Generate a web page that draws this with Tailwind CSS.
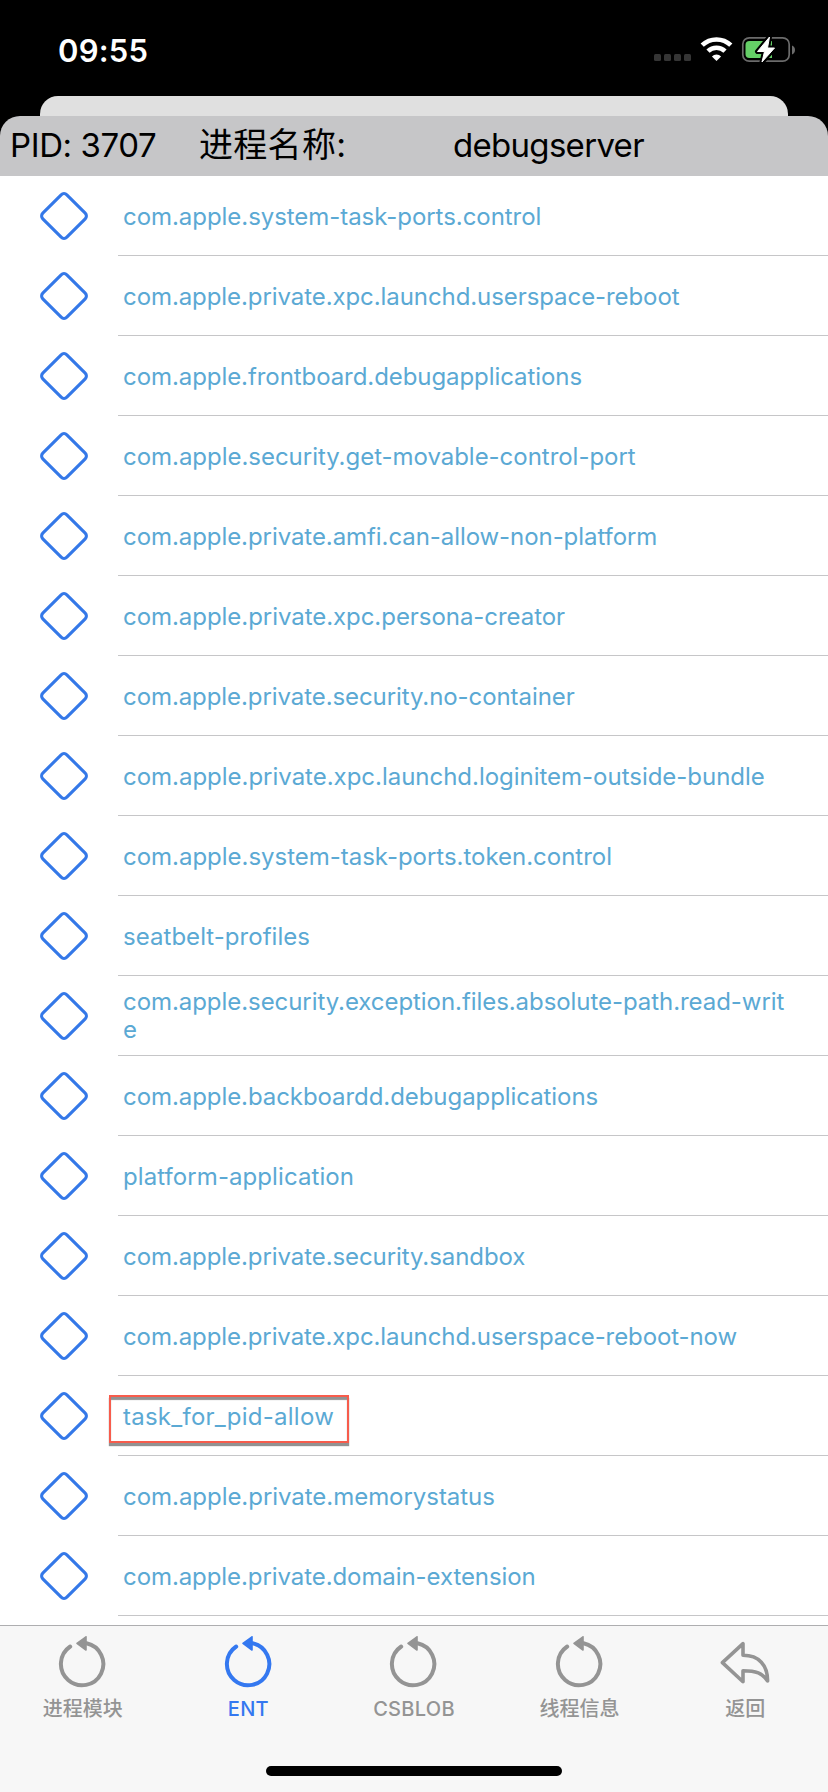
<!DOCTYPE html>
<html lang="zh-CN">
<head>
<meta charset="utf-8">
<title>debugserver</title>
<script src="https://cdn.jsdelivr.net/npm/@tailwindcss/browser@4"></script>
</head>
<body class="bg-black">
<svg class="hidden">
  <symbol id="diamond" viewBox="0 0 50 50"><rect x="8" y="8" width="34" height="34" rx="4" transform="rotate(45 25 25)" fill="none" stroke="#3478e8" stroke-width="3.1"/></symbol>
  <symbol id="reload" viewBox="0 0 48 52"><path d="M12.2 10.5A21.2 21.2 0 1 0 28.5 7.3" fill="none" stroke="currentColor" stroke-width="4" stroke-linecap="round"/><path d="M19 7.3L28 .8V14Z" fill="currentColor" stroke="currentColor" stroke-width="1.6" stroke-linejoin="round"/></symbol>
  <symbol id="back" viewBox="0 0 52 52"><path d="M25 7.7V19.3C41 19.3 49.6 29 49.6 45C44.5 37 38 34.7 25 34.7V45.8L4.4 26.6Z" fill="none" stroke="currentColor" stroke-width="3.6" stroke-linejoin="round"/></symbol>
</svg>
<div class="flex h-[1792px] w-[828px] flex-col overflow-hidden bg-black font-['Inter','Noto_Sans_CJK_SC',sans-serif]">
  <header class="flex h-24 items-start justify-between pt-[30px] pr-[33px] pl-[58px]">
    <span class="pt-px text-[31px] leading-10 font-semibold tracking-[0.2px] text-white">09:55</span>
    <div class="flex h-10 items-center">
      <svg class="h-10 w-[144px]" viewBox="650 30 144 40">
        <g fill="#353535"><rect x="653" y="54" width="7" height="7" rx="1.5"/><rect x="663" y="54" width="7" height="7" rx="1.5"/><rect x="673" y="54" width="7" height="7" rx="1.5"/><rect x="683" y="54" width="7" height="7" rx="1.5"/></g>
        <g fill="none" stroke="#fff" stroke-width="4.6"><path d="M701.2 45.2A20.6 20.6 0 0 1 729.8 45.2"/><path d="M707 51.2A12.2 12.2 0 0 1 724 51.2"/></g>
        <path d="M715.5 61L710.9 56.4A6.7 6.7 0 0 1 720.1 56.4Z" fill="#fff"/>
        <rect x="741.8" y="37.8" width="46.4" height="23.4" rx="6.5" fill="none" stroke="#6b6b6b" stroke-width="1.7"/>
        <path d="M791 45.5V54.5C795 53 795 47 791 45.5Z" fill="#6b6b6b"/>
        <path d="M748.500 41H771V58H748.500A4 4 0 0 1 744.500 54V45A4 4 0 0 1 748.500 41Z" fill="#65ce67"/>
        <path d="M768.500 37L756.500 51.500H763.500L761 62L773.500 48H766.500Z" fill="#fff" stroke="#000" stroke-width="5" stroke-linejoin="round"/>
        <path d="M768.500 37L756.500 51.500H763.500L761 62L773.500 48H766.500Z" fill="#fff" stroke="#fff" stroke-width="1" stroke-linejoin="round"/>
      </svg>
    </div>
  </header>
  <div class="mx-10 h-5 shrink-0 rounded-t-[18px] bg-[#e0e0e0]"></div>
  <div class="flex h-[60px] shrink-0 items-center rounded-t-[20px] bg-[#c6c6c8] pb-0.5 text-[33px] leading-[58px] whitespace-nowrap text-black">
    <div class="w-[199px] pl-[10px] tracking-[-0.4px]">PID: 3707</div>
    <div class="w-[254px] text-[34px] tracking-[0.3px]">进程名称:</div>
    <div class="tracking-[-0.7px]">debugserver</div>
  </div>
  <main id="list" class="h-[1449px] shrink-0 overflow-hidden bg-white"></main>
  <nav class="flex h-[167px] shrink-0 flex-col items-center justify-between border-t border-[#aeaeb0] bg-[#f7f7f7] pb-4">
    <div class="grid w-full grid-cols-5 pt-2.5 text-[20px] font-medium text-[#949494]">
      <div class="flex flex-col items-center"><svg class="mr-0.5 h-[52px] w-12"><use href="#reload"/></svg><span class="mt-[7px] leading-7">进程模块</span></div>
      <div class="flex flex-col items-center text-[#3478f0]"><svg class="h-[52px] w-12"><use href="#reload"/></svg><span class="mt-[7px] leading-7 tracking-[0.3px]">ENT</span></div>
      <div class="flex flex-col items-center"><svg class="mr-0.5 h-[52px] w-12"><use href="#reload"/></svg><span class="mt-[7px] leading-7 tracking-[0.3px]">CSBLOB</span></div>
      <div class="flex flex-col items-center"><svg class="mr-0.5 h-[52px] w-12"><use href="#reload"/></svg><span class="mt-[7px] leading-7">线程信息</span></div>
      <div class="flex flex-col items-center"><svg class="mr-0.5 h-[52px] w-[52px]"><use href="#back"/></svg><span class="mt-[7px] leading-7">返回</span></div>
    </div>
    <div class="h-2.5 w-[296px] rounded-full bg-black"></div>
  </nav>
</div>
<script>
// [entitlement, letter-spacing in px]
const rows = [
  ['com.apple.system-task-ports.control', -0.05],
  ['com.apple.private.xpc.launchd.userspace-reboot', -0.08],
  ['com.apple.frontboard.debugapplications', -0.07],
  ['com.apple.security.get-movable-control-port', -0.03],
  ['com.apple.private.amfi.can-allow-non-platform', -0.07],
  ['com.apple.private.xpc.persona-creator', -0.05],
  ['com.apple.private.security.no-container', -0.08],
  ['com.apple.private.xpc.launchd.loginitem-outside-bundle', -0.02],
  ['com.apple.system-task-ports.token.control', -0.02],
  ['seatbelt-profiles', 0.04],
  ['com.apple.security.exception.files.absolute-path.read-writ<br>e', -0.06],
  ['com.apple.backboardd.debugapplications', -0.07],
  ['platform-application', 0.08],
  ['com.apple.private.security.sandbox', -0.08],
  ['com.apple.private.xpc.launchd.userspace-reboot-now', -0.09],
  ['task_for_pid-allow', 0.25],
  ['com.apple.private.memorystatus', -0.04],
  ['com.apple.private.domain-extension', -0.08],
  ['', 0]
];
document.getElementById('list').innerHTML = rows.map(([t, s]) => `
  <div class="flex h-20">
    <div class="flex w-[118px] shrink-0 items-center pl-[39px]"><svg class="h-[50px] w-[50px]"><use href="#diamond"/></svg></div>
    <div class="relative flex grow items-center border-b border-[#c6c6c8] ${t.includes('<br>') ? 'pt-0' : 'pt-0.5'} pl-[5px] whitespace-nowrap">
      <span class="text-[24px] leading-[28px] text-[#5ba9d4] [font-variant-ligatures:none]" style="letter-spacing:${s}px">${t}</span>
      ${t.startsWith('task_') ? '<div class="absolute top-[19px] -left-[9px] h-12 w-60 border-2 border-[#f75c4c] shadow-[0_3px_1px_#777c,inset_0_3px_1px_#777c]"></div>' : ''}
    </div>
  </div>`).join('');
</script>
</body>
</html>
